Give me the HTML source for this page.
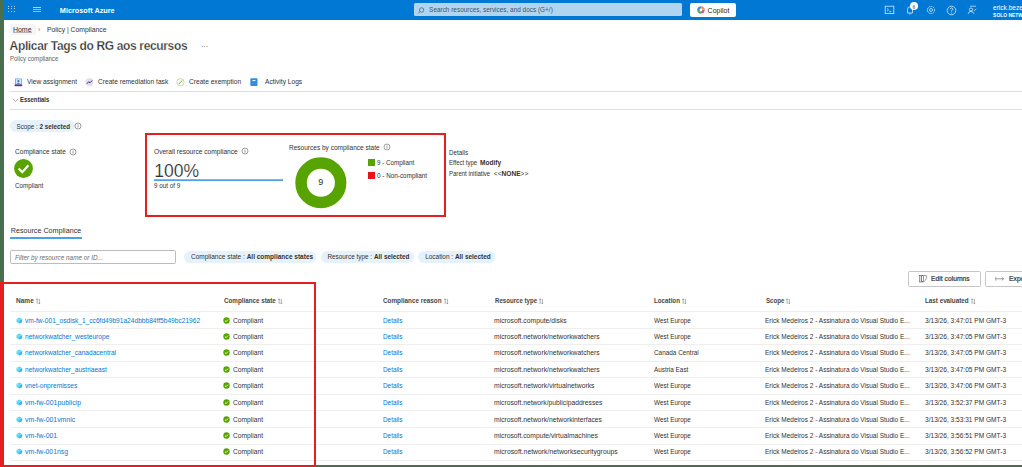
<!DOCTYPE html>
<html><head><meta charset="utf-8"><style>
html,body{margin:0;padding:0;}
body{width:1022px;height:467px;overflow:hidden;position:relative;background:#fff;font-family:"Liberation Sans",sans-serif;}
.t{position:absolute;line-height:1;white-space:nowrap;}
.r{position:absolute;}
.so{font-weight:normal;color:#605e5c;font-size:0.8em;}
#lb{position:absolute;left:0;top:0;width:4px;height:467px;background:#48704e;}
</style></head><body>
<div class="r" style="left:0px;top:0px;width:1022px;height:20px;background:#0078d4"></div>
<div class="t " style="left:59.80px;top:7.00px;font-size:7.3px;font-weight:bold;color:#fff;font-style:normal;">Microsoft Azure</div>
<div class="r" style="left:8.25px;top:5.75px;width:1.1px;height:1.1px;background:#fff;opacity:0.7"></div>
<div class="r" style="left:8.25px;top:8.35px;width:1.1px;height:1.1px;background:#fff;opacity:0.7"></div>
<div class="r" style="left:8.25px;top:10.95px;width:1.1px;height:1.1px;background:#fff;opacity:0.7"></div>
<div class="r" style="left:10.95px;top:5.75px;width:1.1px;height:1.1px;background:#fff;opacity:0.7"></div>
<div class="r" style="left:10.95px;top:8.35px;width:1.1px;height:1.1px;background:#fff;opacity:0.7"></div>
<div class="r" style="left:10.95px;top:10.95px;width:1.1px;height:1.1px;background:#fff;opacity:0.7"></div>
<div class="r" style="left:13.65px;top:5.75px;width:1.1px;height:1.1px;background:#fff;opacity:0.7"></div>
<div class="r" style="left:13.65px;top:8.35px;width:1.1px;height:1.1px;background:#fff;opacity:0.7"></div>
<div class="r" style="left:13.65px;top:10.95px;width:1.1px;height:1.1px;background:#fff;opacity:0.7"></div>
<div class="r" style="left:33px;top:7px;width:7.6px;height:0.8px;background:#fff;opacity:0.7"></div>
<div class="r" style="left:33px;top:9.2px;width:7.6px;height:0.8px;background:#fff;opacity:0.55"></div>
<div class="r" style="left:33px;top:11.3px;width:7.6px;height:0.8px;background:#fff;opacity:0.55"></div>
<div class="r" style="left:413.5px;top:3px;width:268px;height:13.2px;background:#b1d5f1;border-radius:1.5px"></div>
<svg class="r" style="left:417px;top:6.5px" width="8" height="7" viewBox="0 0 8 7"><circle cx="4.6" cy="3" r="2.2" fill="none" stroke="#4a6a8a" stroke-width="0.8"/><line x1="3" y1="4.6" x2="1" y2="6.6" stroke="#4a6a8a" stroke-width="0.8"/></svg>
<div class="t " style="left:429.10px;top:7.00px;font-size:6.43px;font-weight:normal;color:#3b5670;font-style:normal;">Search resources, services, and docs (G+/)</div>
<div class="r" style="left:690.3px;top:3.2px;width:45.8px;height:13.5px;background:#fff;border-radius:2px"></div>
<svg class="r" style="left:696.5px;top:6px" width="8" height="8" viewBox="0 0 8 8"><circle cx="4" cy="4" r="3.6" fill="#e0508a"/><path d="M4 0.4A3.6 3.6 0 0 1 7.6 4L4 4Z" fill="#f2a33a"/><path d="M0.4 4A3.6 3.6 0 0 1 4 0.4L4 4Z" fill="#3a8ee6"/><path d="M4 7.6A3.6 3.6 0 0 1 0.4 4L4 4Z" fill="#48b86a"/><circle cx="4" cy="4" r="1.4" fill="#fff"/></svg>
<div class="t " style="left:707.60px;top:7.00px;font-size:7.0px;font-weight:normal;color:#242424;font-style:normal;">Copilot</div>
<svg class="r" style="left:884px;top:5px" width="11" height="10" viewBox="0 0 11 10"><rect x="1.2" y="1.2" width="8.6" height="7.4" fill="none" stroke="#d8e8f8" stroke-width="0.8"/><path d="M3 3.4L4.6 4.8L3 6.2" fill="none" stroke="#d8e8f8" stroke-width="0.8"/><line x1="5.2" y1="6.6" x2="7.4" y2="6.6" stroke="#d8e8f8" stroke-width="0.8"/></svg>
<svg class="r" style="left:905px;top:5px" width="10" height="10" viewBox="0 0 10 10"><path d="M2.5 8L2.5 4.5Q2.5 1.8 5 1.8Q7.5 1.8 7.5 4.5L7.5 8Z" fill="none" stroke="#d8e8f8" stroke-width="0.8"/><path d="M4 8.6Q5 9.6 6 8.6" fill="none" stroke="#d8e8f8" stroke-width="0.7"/></svg>
<div class="r" style="left:910.1px;top:1.9px;width:8.3px;height:8.3px;border-radius:50%;background:#fff"></div>
<div class="t " style="left:912.60px;top:5.00px;font-size:5px;font-weight:bold;color:#6a7fb0;font-style:normal;">6</div>
<svg class="r" style="left:926px;top:5px" width="10" height="10" viewBox="0 0 10 10"><circle cx="5" cy="5" r="3.6" fill="none" stroke="#d8e8f8" stroke-width="0.9" stroke-dasharray="1.6 0.7"/><circle cx="5" cy="5" r="1.5" fill="none" stroke="#d8e8f8" stroke-width="0.8"/></svg>
<svg class="r" style="left:946px;top:4.5px" width="11" height="11" viewBox="0 0 11 11"><circle cx="5.5" cy="5.5" r="4.3" fill="none" stroke="#d8e8f8" stroke-width="0.8"/><path d="M4.2 4.3Q4.2 3 5.5 3Q6.8 3 6.8 4.2Q6.8 5 5.6 5.6L5.6 6.6" fill="none" stroke="#d8e8f8" stroke-width="0.8"/><circle cx="5.6" cy="8" r="0.5" fill="#d8e8f8"/></svg>
<svg class="r" style="left:967px;top:5px" width="10" height="10" viewBox="0 0 10 10"><circle cx="4" cy="4.6" r="1.6" fill="none" stroke="#d8e8f8" stroke-width="0.8"/><path d="M1.2 8.8Q1.6 6.4 4 6.4Q6.4 6.4 6.8 8.8" fill="none" stroke="#d8e8f8" stroke-width="0.8"/><path d="M3 1.2L9 1.2" stroke="#d8e8f8" stroke-width="0.7"/><path d="M6.8 4.8L7.6 5.6L9.2 3.8" fill="none" stroke="#d8e8f8" stroke-width="0.7"/></svg>
<div class="t " style="left:993.00px;top:5.00px;font-size:6.58px;font-weight:normal;color:#fff;font-style:normal;">erick.bezerra</div>
<div class="t " style="left:993.10px;top:14.00px;font-size:4.95px;font-weight:bold;color:#fff;font-style:normal;">SOLO NETWORKS</div>
<div class="r" style="left:9.8px;top:23.8px;width:26px;height:10.8px;background:#f5f5f5;border-radius:2px"></div>
<div class="t " style="left:12.90px;top:26.00px;font-size:7.0px;font-weight:normal;color:#323130;font-style:normal;">Home</div>
<div class="r" style="left:12.9px;top:32.3px;width:19.6px;height:1.2px;background:#b3b3b3"></div>
<div class="t " style="left:38.00px;top:27.00px;font-size:6.8px;font-weight:normal;color:#8a8886;font-style:normal;">›</div>
<div class="t " style="left:46.70px;top:26.00px;font-size:7.197px;font-weight:normal;color:#323130;font-style:normal;transform:scaleX(0.9434);transform-origin:0 0;">Policy | Compliance</div>
<div class="t " style="left:9.60px;top:40.00px;font-size:12px;font-weight:bold;color:#323130;font-style:normal;letter-spacing:-0.35px;-webkit-text-stroke:0.25px #fff;">Aplicar Tags do RG aos recursos</div>
<div class="t " style="left:201.00px;top:43.00px;font-size:7px;font-weight:normal;color:#323130;font-style:normal;">···</div>
<div class="t " style="left:9.70px;top:56.00px;font-size:6.754px;font-weight:normal;color:#605e5c;font-style:normal;transform:scaleX(0.8929);transform-origin:0 0;">Policy compliance</div>
<div class="t " style="left:26.60px;top:79.00px;font-size:7.16px;font-weight:normal;color:#323130;font-style:normal;transform:scaleX(0.9259);transform-origin:0 0;">View assignment</div>
<div class="t " style="left:97.70px;top:79.00px;font-size:7.15px;font-weight:normal;color:#323130;font-style:normal;transform:scaleX(0.9259);transform-origin:0 0;">Create remediation task</div>
<div class="t " style="left:189.40px;top:79.00px;font-size:7.15px;font-weight:normal;color:#323130;font-style:normal;transform:scaleX(0.9259);transform-origin:0 0;">Create exemption</div>
<div class="t " style="left:265.00px;top:79.00px;font-size:7.15px;font-weight:normal;color:#323130;font-style:normal;transform:scaleX(0.9259);transform-origin:0 0;">Activity Logs</div>
<svg class="r" style="left:13.5px;top:77.5px" width="9" height="9" viewBox="0 0 9 9"><rect x="1" y="0.4" width="6.8" height="6.2" rx="0.5" fill="#5aa6e6"/><rect x="1.8" y="1.2" width="5.2" height="4.6" fill="#d6ecfb"/><circle cx="4.4" cy="3.2" r="1.1" fill="#2c7cd0"/><path d="M2.6 5.8Q4.4 3.8 6.2 5.8Z" fill="#2c7cd0"/><rect x="0.6" y="6.4" width="7.6" height="1.8" fill="#5c3391"/></svg>
<svg class="r" style="left:84.7px;top:77.8px" width="9" height="9" viewBox="0 0 9 9"><circle cx="4.5" cy="4.2" r="4" fill="#e4dcef"/><path d="M1.8 5.8L3.6 3.8L5 4.8L7.2 2.4" fill="none" stroke="#4b2c72" stroke-width="1"/></svg>
<svg class="r" style="left:176.3px;top:77.8px" width="9" height="9" viewBox="0 0 9 9"><circle cx="4.5" cy="4.2" r="3.6" fill="none" stroke="#a6d46a" stroke-width="0.7"/><path d="M2.8 6L6.2 2.4" stroke="#5aa628" stroke-width="0.9"/></svg>
<svg class="r" style="left:250.3px;top:77.8px" width="8" height="9" viewBox="0 0 8 9"><rect x="0.3" y="0.2" width="7.2" height="7.8" rx="0.8" fill="#2f8fe6"/><rect x="2.4" y="2" width="3" height="0.9" fill="#fff"/></svg>
<div class="r" style="left:10px;top:91px;width:1012px;height:1px;background:#e1dfdd"></div>
<svg class="r" style="left:11.5px;top:97.5px" width="7" height="5" viewBox="0 0 7 5"><path d="M0.8 0.8L3.5 3.6L6.2 0.8" fill="none" stroke="#8a8886" stroke-width="0.7"/></svg>
<div class="t " style="left:20.00px;top:97.00px;font-size:6.808px;font-weight:bold;color:#323130;font-style:normal;transform:scaleX(0.8696);transform-origin:0 0;">Essentials</div>
<div class="r" style="left:10px;top:109px;width:1012px;height:1px;background:#e1dfdd"></div>
<div class="r" style="left:10px;top:120.4px;width:65px;height:12px;background:#e6f2fb;border-radius:6px"></div>
<div class="t " style="left:16.50px;top:124.00px;font-size:6.3px;font-weight:normal;color:#323130;font-style:normal;">Scope : <b>2 selected</b></div>
<svg class="r" style="left:74.40px;top:121.80px" width="8" height="8" viewBox="0 0 8 8"><circle cx="4" cy="4" r="3.0" fill="none" stroke="#605e5c" stroke-width="0.6"/><line x1="4" y1="3.2" x2="4" y2="5.6" stroke="#605e5c" stroke-width="0.65"/><circle cx="4" cy="2.3" r="0.35" fill="#605e5c"/></svg>
<div class="t " style="left:14.50px;top:148.00px;font-size:7.249px;font-weight:normal;color:#323130;font-style:normal;transform:scaleX(0.9091);transform-origin:0 0;">Compliance state</div>
<svg class="r" style="left:68.60px;top:147.60px" width="8" height="8" viewBox="0 0 8 8"><circle cx="4" cy="4" r="3.0" fill="none" stroke="#605e5c" stroke-width="0.6"/><line x1="4" y1="3.2" x2="4" y2="5.6" stroke="#605e5c" stroke-width="0.65"/><circle cx="4" cy="2.3" r="0.35" fill="#605e5c"/></svg>
<svg class="r" style="left:14px;top:158.6px" width="19" height="19" viewBox="0 0 19 19"><circle cx="9.5" cy="9.5" r="9.4" fill="#57a300"/><path d="M4.7 9.6L8.3 13.3L14.4 6.3" fill="none" stroke="#fff" stroke-width="2.1"/></svg>
<div class="t " style="left:14.50px;top:183.00px;font-size:6.919px;font-weight:normal;color:#323130;font-style:normal;transform:scaleX(0.9091);transform-origin:0 0;">Compliant</div>
<div class="r" style="left:145px;top:133px;width:300.5px;height:83.5px;border:2.5px solid #e51f1f;box-sizing:border-box"></div>
<div class="t " style="left:153.80px;top:148.00px;font-size:7.271px;font-weight:normal;color:#323130;font-style:normal;transform:scaleX(0.9091);transform-origin:0 0;">Overall resource compliance</div>
<svg class="r" style="left:241.20px;top:146.60px" width="8" height="8" viewBox="0 0 8 8"><circle cx="4" cy="4" r="3.0" fill="none" stroke="#605e5c" stroke-width="0.6"/><line x1="4" y1="3.2" x2="4" y2="5.6" stroke="#605e5c" stroke-width="0.65"/><circle cx="4" cy="2.3" r="0.35" fill="#605e5c"/></svg>
<div class="t " style="left:154.20px;top:163.00px;font-size:17.5px;font-weight:normal;color:#323130;font-style:normal;-webkit-text-stroke:0.15px #fff;">100%</div>
<div class="r" style="left:153.8px;top:179px;width:129.2px;height:2px;background:linear-gradient(#8cc4ee,#3d96e0)"></div>
<div class="t " style="left:153.80px;top:183.00px;font-size:6.782px;font-weight:normal;color:#323130;font-style:normal;transform:scaleX(0.9259);transform-origin:0 0;">9 out of 9</div>
<div class="t " style="left:288.50px;top:145.00px;font-size:7.183px;font-weight:normal;color:#323130;font-style:normal;transform:scaleX(0.9091);transform-origin:0 0;">Resources by compliance state</div>
<svg class="r" style="left:382.80px;top:142.60px" width="8" height="8" viewBox="0 0 8 8"><circle cx="4" cy="4" r="3.0" fill="none" stroke="#605e5c" stroke-width="0.6"/><line x1="4" y1="3.2" x2="4" y2="5.6" stroke="#605e5c" stroke-width="0.65"/><circle cx="4" cy="2.3" r="0.35" fill="#605e5c"/></svg>
<svg class="r" style="left:294px;top:155.5px" width="54" height="54" viewBox="0 0 54 54"><circle cx="26.85" cy="26.75" r="19.8" fill="none" stroke="#57a300" stroke-width="11.5"/></svg>
<div class="t " style="left:318.30px;top:178.00px;font-size:9px;font-weight:normal;color:#323130;font-style:normal;">9</div>
<div class="t " style="left:376.60px;top:159.00px;font-size:7.011px;font-weight:normal;color:#323130;font-style:normal;transform:scaleX(0.8929);transform-origin:0 0;">9 - Compliant</div>
<div class="t " style="left:376.60px;top:173.00px;font-size:7.123px;font-weight:normal;color:#323130;font-style:normal;transform:scaleX(0.8929);transform-origin:0 0;">0 - Non-compliant</div>
<div class="r" style="left:367.9px;top:159.2px;width:6.8px;height:6.6px;background:#57a300"></div>
<div class="r" style="left:367.9px;top:172px;width:6.8px;height:6.8px;background:#e8141a"></div>
<div class="t " style="left:448.80px;top:149.00px;font-size:7.0px;font-weight:normal;color:#323130;font-style:normal;transform:scaleX(0.893);transform-origin:0 0;">Details</div>
<div class="t " style="left:448.80px;top:160.00px;font-size:6.6px;font-weight:normal;color:#323130;font-style:normal;transform:scaleX(0.908);transform-origin:0 0;">Effect type</div>
<div class="t " style="left:479.90px;top:160.00px;font-size:6.9px;font-weight:bold;color:#323130;font-style:normal;transform:scaleX(0.95);transform-origin:0 0;">Modify</div>
<div class="t " style="left:448.80px;top:171.00px;font-size:6.6px;font-weight:normal;color:#323130;font-style:normal;transform:scaleX(0.914);transform-origin:0 0;">Parent initiative</div>
<div class="t " style="left:493.80px;top:171.00px;font-size:6.6px;font-weight:normal;color:#323130;font-style:normal;">&lt;&lt;<b>NONE</b>&gt;&gt;</div>
<div class="t " style="left:10.80px;top:228.00px;font-size:7.16px;font-weight:normal;color:#323130;font-style:normal;">Resource Compliance</div>
<div class="r" style="left:9.8px;top:237px;width:72px;height:2px;background:#4ca0e6"></div>
<div class="r" style="left:9.8px;top:250.2px;width:166px;height:13.5px;border:1px solid #bebcba;border-radius:1.5px;box-sizing:border-box"></div>
<div class="t " style="left:14.70px;top:254.00px;font-size:7.029px;font-weight:normal;color:#6f6d6b;font-style:italic;transform:scaleX(0.9091);transform-origin:0 0;">Filter by resource name or ID...</div>
<div class="r" style="left:184px;top:251.3px;width:132.4px;height:11.9px;background:#e6f2fb;border-radius:6px"></div>
<div class="t " style="left:191.00px;top:254.00px;font-size:6.5px;font-weight:normal;color:#323130;font-style:normal;">Compliance state : <b>All compliance states</b></div>
<div class="r" style="left:321px;top:251.3px;width:93px;height:11.9px;background:#e6f2fb;border-radius:6px"></div>
<div class="t " style="left:327.40px;top:254.00px;font-size:6.4px;font-weight:normal;color:#323130;font-style:normal;">Resource type : <b>All selected</b></div>
<div class="r" style="left:417.8px;top:251.3px;width:77.5px;height:11.9px;background:#e6f2fb;border-radius:6px"></div>
<div class="t " style="left:425.20px;top:254.00px;font-size:6.45px;font-weight:normal;color:#323130;font-style:normal;">Location : <b>All selected</b></div>
<div class="r" style="left:908.1px;top:270.5px;width:73.1px;height:16px;border:1px solid #c8c6c4;border-radius:1.5px;box-sizing:border-box"></div>
<svg class="r" style="left:918.5px;top:275px" width="9" height="8" viewBox="0 0 9 8"><rect x="0.5" y="0.6" width="1.6" height="6.4" fill="none" stroke="#605e5c" stroke-width="0.6"/><rect x="2.7" y="0.6" width="1.6" height="6.4" fill="none" stroke="#605e5c" stroke-width="0.6"/><path d="M4.9 0.6L7.6 0.6L7.6 3L5.4 6.6" fill="none" stroke="#605e5c" stroke-width="0.6"/></svg>
<div class="t " style="left:931.30px;top:275.00px;font-size:7.0px;font-weight:normal;color:#323130;font-style:normal;transform:scaleX(0.965);transform-origin:0 0;-webkit-text-stroke:0.2px #323130;">Edit columns</div>
<div class="r" style="left:985.4px;top:270.5px;width:60px;height:16px;border:1px solid #c8c6c4;border-radius:1.5px;box-sizing:border-box"></div>
<svg class="r" style="left:995px;top:275.5px" width="10" height="6" viewBox="0 0 10 6"><line x1="0.8" y1="1" x2="0.8" y2="4.6" stroke="#605e5c" stroke-width="0.6"/><line x1="0.8" y1="2.8" x2="8.6" y2="2.8" stroke="#605e5c" stroke-width="0.6"/><path d="M6.8 1.2L8.6 2.8L6.8 4.4" fill="none" stroke="#605e5c" stroke-width="0.6"/></svg>
<div class="t " style="left:1008.60px;top:275.00px;font-size:7.0px;font-weight:normal;color:#323130;font-style:normal;transform:scaleX(0.965);transform-origin:0 0;-webkit-text-stroke:0.2px #323130;">Export</div>
<div class="t " style="left:16.00px;top:298.00px;font-size:7.1px;font-weight:bold;color:#484644;font-style:normal;transform:scaleX(0.9211);transform-origin:0 0;">Name</div>
<div class="t " style="left:223.50px;top:298.00px;font-size:7.1px;font-weight:bold;color:#484644;font-style:normal;transform:scaleX(0.8817);transform-origin:0 0;">Compliance state</div>
<div class="t " style="left:382.80px;top:298.00px;font-size:7.1px;font-weight:bold;color:#484644;font-style:normal;transform:scaleX(0.8958);transform-origin:0 0;">Compliance reason</div>
<div class="t " style="left:494.50px;top:298.00px;font-size:7.1px;font-weight:bold;color:#484644;font-style:normal;transform:scaleX(0.862);transform-origin:0 0;">Resource type</div>
<div class="t " style="left:654.00px;top:298.00px;font-size:7.1px;font-weight:bold;color:#484644;font-style:normal;transform:scaleX(0.8789);transform-origin:0 0;">Location</div>
<div class="t " style="left:765.60px;top:298.00px;font-size:7.1px;font-weight:bold;color:#484644;font-style:normal;transform:scaleX(0.8676);transform-origin:0 0;">Scope</div>
<div class="t " style="left:924.80px;top:298.00px;font-size:7.1px;font-weight:bold;color:#484644;font-style:normal;transform:scaleX(0.8845);transform-origin:0 0;">Last evaluated</div>
<svg class="r" style="left:36.30px;top:297.5px" width="5" height="7" viewBox="0 0 5 7"><path d="M1.1 5.8V0.8M0.2 1.8L1.1 0.8L2 1.8M3.3 0.8V5.8M2.4 4.8L3.3 5.8L4.2 4.8" fill="none" stroke="#797775" stroke-width="0.6"/></svg>
<svg class="r" style="left:278.20px;top:297.5px" width="5" height="7" viewBox="0 0 5 7"><path d="M1.1 5.8V0.8M0.2 1.8L1.1 0.8L2 1.8M3.3 0.8V5.8M2.4 4.8L3.3 5.8L4.2 4.8" fill="none" stroke="#797775" stroke-width="0.6"/></svg>
<svg class="r" style="left:443.90px;top:297.5px" width="5" height="7" viewBox="0 0 5 7"><path d="M1.1 5.8V0.8M0.2 1.8L1.1 0.8L2 1.8M3.3 0.8V5.8M2.4 4.8L3.3 5.8L4.2 4.8" fill="none" stroke="#797775" stroke-width="0.6"/></svg>
<svg class="r" style="left:539.30px;top:297.5px" width="5" height="7" viewBox="0 0 5 7"><path d="M1.1 5.8V0.8M0.2 1.8L1.1 0.8L2 1.8M3.3 0.8V5.8M2.4 4.8L3.3 5.8L4.2 4.8" fill="none" stroke="#797775" stroke-width="0.6"/></svg>
<svg class="r" style="left:682.20px;top:297.5px" width="5" height="7" viewBox="0 0 5 7"><path d="M1.1 5.8V0.8M0.2 1.8L1.1 0.8L2 1.8M3.3 0.8V5.8M2.4 4.8L3.3 5.8L4.2 4.8" fill="none" stroke="#797775" stroke-width="0.6"/></svg>
<svg class="r" style="left:785.60px;top:297.5px" width="5" height="7" viewBox="0 0 5 7"><path d="M1.1 5.8V0.8M0.2 1.8L1.1 0.8L2 1.8M3.3 0.8V5.8M2.4 4.8L3.3 5.8L4.2 4.8" fill="none" stroke="#797775" stroke-width="0.6"/></svg>
<svg class="r" style="left:970.80px;top:297.5px" width="5" height="7" viewBox="0 0 5 7"><path d="M1.1 5.8V0.8M0.2 1.8L1.1 0.8L2 1.8M3.3 0.8V5.8M2.4 4.8L3.3 5.8L4.2 4.8" fill="none" stroke="#797775" stroke-width="0.6"/></svg>
<div class="r" style="left:9.6px;top:311px;width:1013px;height:1px;background:#f0efee"></div>
<div class="t " style="left:25.30px;top:318.00px;font-size:6.7px;font-weight:normal;color:#0078d4;font-style:normal;transform:scaleX(0.9881);transform-origin:0 0;">vm-fw-001_osdisk_1_cc6fd49b91a24dbbb84ff5b49bc21962</div>
<div class="t " style="left:232.90px;top:318.00px;font-size:6.7px;font-weight:normal;color:#323130;font-style:normal;transform:scaleX(0.9985);transform-origin:0 0;">Compliant</div>
<div class="t " style="left:382.80px;top:318.00px;font-size:6.7px;font-weight:normal;color:#0078d4;font-style:normal;transform:scaleX(0.9522);transform-origin:0 0;">Details</div>
<div class="t " style="left:494.40px;top:318.00px;font-size:6.7px;font-weight:normal;color:#323130;font-style:normal;transform:scaleX(1.0134);transform-origin:0 0;">microsoft.compute/disks</div>
<div class="t " style="left:654.00px;top:318.00px;font-size:6.7px;font-weight:normal;color:#323130;font-style:normal;transform:scaleX(0.9582);transform-origin:0 0;">West Europe</div>
<div class="t " style="left:765.40px;top:318.00px;font-size:6.7px;font-weight:normal;color:#323130;font-style:normal;transform:scaleX(0.9716);transform-origin:0 0;">Erick Medeiros 2 - Assinatura do Visual Studio E...</div>
<div class="t " style="left:924.80px;top:318.00px;font-size:6.7px;font-weight:normal;color:#323130;font-style:normal;transform:scaleX(0.9821);transform-origin:0 0;">3/13/26, 3:47:01 PM GMT-3</div>
<div class="r" style="left:9.6px;top:327.5px;width:1013px;height:1px;background:#f0efee"></div>
<svg class="r" style="left:16px;top:317.10px" width="7" height="7" viewBox="0 0 7 7"><path d="M3.3 0.4L6.1 1.9L6.1 5L3.3 6.5L0.5 5L0.5 1.9Z" fill="#5ad6f8"/><path d="M3.3 3.4L6.1 1.9L6.1 5L3.3 6.5Z" fill="#3bb4ec"/><path d="M0.5 1.9L3.3 3.4L6.1 1.9" fill="none" stroke="#d0f4ff" stroke-width="0.4"/></svg>
<svg class="r" style="left:222.7px;top:317.10px" width="7" height="7" viewBox="0 0 7 7"><circle cx="3.5" cy="3.5" r="3.2" fill="#57a300"/><path d="M1.9 3.6L3 4.7L5.1 2.5" fill="none" stroke="#fff" stroke-width="0.85"/></svg>
<div class="t " style="left:25.30px;top:334.00px;font-size:6.7px;font-weight:normal;color:#0078d4;font-style:normal;transform:scaleX(0.991);transform-origin:0 0;">networkwatcher_westeurope</div>
<div class="t " style="left:232.90px;top:334.00px;font-size:6.7px;font-weight:normal;color:#323130;font-style:normal;transform:scaleX(0.9985);transform-origin:0 0;">Compliant</div>
<div class="t " style="left:382.80px;top:334.00px;font-size:6.7px;font-weight:normal;color:#0078d4;font-style:normal;transform:scaleX(0.9522);transform-origin:0 0;">Details</div>
<div class="t " style="left:494.40px;top:334.00px;font-size:6.7px;font-weight:normal;color:#323130;font-style:normal;transform:scaleX(1.0119);transform-origin:0 0;">microsoft.network/networkwatchers</div>
<div class="t " style="left:654.00px;top:334.00px;font-size:6.7px;font-weight:normal;color:#323130;font-style:normal;transform:scaleX(0.9582);transform-origin:0 0;">West Europe</div>
<div class="t " style="left:765.40px;top:334.00px;font-size:6.7px;font-weight:normal;color:#323130;font-style:normal;transform:scaleX(0.9716);transform-origin:0 0;">Erick Medeiros 2 - Assinatura do Visual Studio E...</div>
<div class="t " style="left:924.80px;top:334.00px;font-size:6.7px;font-weight:normal;color:#323130;font-style:normal;transform:scaleX(0.9821);transform-origin:0 0;">3/13/26, 3:47:05 PM GMT-3</div>
<div class="r" style="left:9.6px;top:344.1px;width:1013px;height:1px;background:#f0efee"></div>
<svg class="r" style="left:16px;top:333.10px" width="7" height="7" viewBox="0 0 7 7"><path d="M3.3 0.4L6.1 1.9L6.1 5L3.3 6.5L0.5 5L0.5 1.9Z" fill="#5ad6f8"/><path d="M3.3 3.4L6.1 1.9L6.1 5L3.3 6.5Z" fill="#3bb4ec"/><path d="M0.5 1.9L3.3 3.4L6.1 1.9" fill="none" stroke="#d0f4ff" stroke-width="0.4"/></svg>
<svg class="r" style="left:222.7px;top:333.10px" width="7" height="7" viewBox="0 0 7 7"><circle cx="3.5" cy="3.5" r="3.2" fill="#57a300"/><path d="M1.9 3.6L3 4.7L5.1 2.5" fill="none" stroke="#fff" stroke-width="0.85"/></svg>
<div class="t " style="left:25.30px;top:350.00px;font-size:6.7px;font-weight:normal;color:#0078d4;font-style:normal;transform:scaleX(0.9836);transform-origin:0 0;">networkwatcher_canadacentral</div>
<div class="t " style="left:232.90px;top:350.00px;font-size:6.7px;font-weight:normal;color:#323130;font-style:normal;transform:scaleX(0.9985);transform-origin:0 0;">Compliant</div>
<div class="t " style="left:382.80px;top:350.00px;font-size:6.7px;font-weight:normal;color:#0078d4;font-style:normal;transform:scaleX(0.9522);transform-origin:0 0;">Details</div>
<div class="t " style="left:494.40px;top:350.00px;font-size:6.7px;font-weight:normal;color:#323130;font-style:normal;transform:scaleX(1.0119);transform-origin:0 0;">microsoft.network/networkwatchers</div>
<div class="t " style="left:654.00px;top:350.00px;font-size:6.7px;font-weight:normal;color:#323130;font-style:normal;transform:scaleX(0.9552);transform-origin:0 0;">Canada Central</div>
<div class="t " style="left:765.40px;top:350.00px;font-size:6.7px;font-weight:normal;color:#323130;font-style:normal;transform:scaleX(0.9716);transform-origin:0 0;">Erick Medeiros 2 - Assinatura do Visual Studio E...</div>
<div class="t " style="left:924.80px;top:350.00px;font-size:6.7px;font-weight:normal;color:#323130;font-style:normal;transform:scaleX(0.9821);transform-origin:0 0;">3/13/26, 3:47:05 PM GMT-3</div>
<div class="r" style="left:9.6px;top:360.8px;width:1013px;height:1px;background:#f0efee"></div>
<svg class="r" style="left:16px;top:349.10px" width="7" height="7" viewBox="0 0 7 7"><path d="M3.3 0.4L6.1 1.9L6.1 5L3.3 6.5L0.5 5L0.5 1.9Z" fill="#5ad6f8"/><path d="M3.3 3.4L6.1 1.9L6.1 5L3.3 6.5Z" fill="#3bb4ec"/><path d="M0.5 1.9L3.3 3.4L6.1 1.9" fill="none" stroke="#d0f4ff" stroke-width="0.4"/></svg>
<svg class="r" style="left:222.7px;top:349.10px" width="7" height="7" viewBox="0 0 7 7"><circle cx="3.5" cy="3.5" r="3.2" fill="#57a300"/><path d="M1.9 3.6L3 4.7L5.1 2.5" fill="none" stroke="#fff" stroke-width="0.85"/></svg>
<div class="t " style="left:25.30px;top:367.00px;font-size:6.7px;font-weight:normal;color:#0078d4;font-style:normal;transform:scaleX(0.9836);transform-origin:0 0;">networkwatcher_austriaeast</div>
<div class="t " style="left:232.90px;top:367.00px;font-size:6.7px;font-weight:normal;color:#323130;font-style:normal;transform:scaleX(0.9985);transform-origin:0 0;">Compliant</div>
<div class="t " style="left:382.80px;top:367.00px;font-size:6.7px;font-weight:normal;color:#0078d4;font-style:normal;transform:scaleX(0.9522);transform-origin:0 0;">Details</div>
<div class="t " style="left:494.40px;top:367.00px;font-size:6.7px;font-weight:normal;color:#323130;font-style:normal;transform:scaleX(1.0119);transform-origin:0 0;">microsoft.network/networkwatchers</div>
<div class="t " style="left:654.00px;top:367.00px;font-size:6.7px;font-weight:normal;color:#323130;font-style:normal;transform:scaleX(0.9522);transform-origin:0 0;">Austria East</div>
<div class="t " style="left:765.40px;top:367.00px;font-size:6.7px;font-weight:normal;color:#323130;font-style:normal;transform:scaleX(0.9716);transform-origin:0 0;">Erick Medeiros 2 - Assinatura do Visual Studio E...</div>
<div class="t " style="left:924.80px;top:367.00px;font-size:6.7px;font-weight:normal;color:#323130;font-style:normal;transform:scaleX(0.9821);transform-origin:0 0;">3/13/26, 3:47:05 PM GMT-3</div>
<div class="r" style="left:9.6px;top:377.1px;width:1013px;height:1px;background:#f0efee"></div>
<svg class="r" style="left:16px;top:366.10px" width="7" height="7" viewBox="0 0 7 7"><path d="M3.3 0.4L6.1 1.9L6.1 5L3.3 6.5L0.5 5L0.5 1.9Z" fill="#5ad6f8"/><path d="M3.3 3.4L6.1 1.9L6.1 5L3.3 6.5Z" fill="#3bb4ec"/><path d="M0.5 1.9L3.3 3.4L6.1 1.9" fill="none" stroke="#d0f4ff" stroke-width="0.4"/></svg>
<svg class="r" style="left:222.7px;top:366.10px" width="7" height="7" viewBox="0 0 7 7"><circle cx="3.5" cy="3.5" r="3.2" fill="#57a300"/><path d="M1.9 3.6L3 4.7L5.1 2.5" fill="none" stroke="#fff" stroke-width="0.85"/></svg>
<div class="t " style="left:25.30px;top:383.00px;font-size:6.7px;font-weight:normal;color:#0078d4;font-style:normal;transform:scaleX(0.9896);transform-origin:0 0;">vnet-onpremisses</div>
<div class="t " style="left:232.90px;top:383.00px;font-size:6.7px;font-weight:normal;color:#323130;font-style:normal;transform:scaleX(0.9985);transform-origin:0 0;">Compliant</div>
<div class="t " style="left:382.80px;top:383.00px;font-size:6.7px;font-weight:normal;color:#0078d4;font-style:normal;transform:scaleX(0.9522);transform-origin:0 0;">Details</div>
<div class="t " style="left:494.40px;top:383.00px;font-size:6.7px;font-weight:normal;color:#323130;font-style:normal;transform:scaleX(1.0164);transform-origin:0 0;">microsoft.network/virtualnetworks</div>
<div class="t " style="left:654.00px;top:383.00px;font-size:6.7px;font-weight:normal;color:#323130;font-style:normal;transform:scaleX(0.9582);transform-origin:0 0;">West Europe</div>
<div class="t " style="left:765.40px;top:383.00px;font-size:6.7px;font-weight:normal;color:#323130;font-style:normal;transform:scaleX(0.9716);transform-origin:0 0;">Erick Medeiros 2 - Assinatura do Visual Studio E...</div>
<div class="t " style="left:924.80px;top:383.00px;font-size:6.7px;font-weight:normal;color:#323130;font-style:normal;transform:scaleX(0.9821);transform-origin:0 0;">3/13/26, 3:47:06 PM GMT-3</div>
<div class="r" style="left:9.6px;top:393.7px;width:1013px;height:1px;background:#f0efee"></div>
<svg class="r" style="left:16px;top:382.10px" width="7" height="7" viewBox="0 0 7 7"><path d="M3.3 0.4L6.1 1.9L6.1 5L3.3 6.5L0.5 5L0.5 1.9Z" fill="#5ad6f8"/><path d="M3.3 3.4L6.1 1.9L6.1 5L3.3 6.5Z" fill="#3bb4ec"/><path d="M0.5 1.9L3.3 3.4L6.1 1.9" fill="none" stroke="#d0f4ff" stroke-width="0.4"/></svg>
<svg class="r" style="left:222.7px;top:382.10px" width="7" height="7" viewBox="0 0 7 7"><circle cx="3.5" cy="3.5" r="3.2" fill="#57a300"/><path d="M1.9 3.6L3 4.7L5.1 2.5" fill="none" stroke="#fff" stroke-width="0.85"/></svg>
<div class="t " style="left:25.30px;top:400.00px;font-size:6.7px;font-weight:normal;color:#0078d4;font-style:normal;transform:scaleX(1.0403);transform-origin:0 0;">vm-fw-001publicip</div>
<div class="t " style="left:232.90px;top:400.00px;font-size:6.7px;font-weight:normal;color:#323130;font-style:normal;transform:scaleX(0.9985);transform-origin:0 0;">Compliant</div>
<div class="t " style="left:382.80px;top:400.00px;font-size:6.7px;font-weight:normal;color:#0078d4;font-style:normal;transform:scaleX(0.9522);transform-origin:0 0;">Details</div>
<div class="t " style="left:494.40px;top:400.00px;font-size:6.7px;font-weight:normal;color:#323130;font-style:normal;transform:scaleX(1.006);transform-origin:0 0;">microsoft.network/publicipaddresses</div>
<div class="t " style="left:654.00px;top:400.00px;font-size:6.7px;font-weight:normal;color:#323130;font-style:normal;transform:scaleX(0.9582);transform-origin:0 0;">West Europe</div>
<div class="t " style="left:765.40px;top:400.00px;font-size:6.7px;font-weight:normal;color:#323130;font-style:normal;transform:scaleX(0.9716);transform-origin:0 0;">Erick Medeiros 2 - Assinatura do Visual Studio E...</div>
<div class="t " style="left:924.80px;top:400.00px;font-size:6.7px;font-weight:normal;color:#323130;font-style:normal;transform:scaleX(0.9821);transform-origin:0 0;">3/13/26, 3:52:37 PM GMT-3</div>
<div class="r" style="left:9.6px;top:410.2px;width:1013px;height:1px;background:#f0efee"></div>
<svg class="r" style="left:16px;top:399.10px" width="7" height="7" viewBox="0 0 7 7"><path d="M3.3 0.4L6.1 1.9L6.1 5L3.3 6.5L0.5 5L0.5 1.9Z" fill="#5ad6f8"/><path d="M3.3 3.4L6.1 1.9L6.1 5L3.3 6.5Z" fill="#3bb4ec"/><path d="M0.5 1.9L3.3 3.4L6.1 1.9" fill="none" stroke="#d0f4ff" stroke-width="0.4"/></svg>
<svg class="r" style="left:222.7px;top:399.10px" width="7" height="7" viewBox="0 0 7 7"><circle cx="3.5" cy="3.5" r="3.2" fill="#57a300"/><path d="M1.9 3.6L3 4.7L5.1 2.5" fill="none" stroke="#fff" stroke-width="0.85"/></svg>
<div class="t " style="left:25.30px;top:417.00px;font-size:6.7px;font-weight:normal;color:#0078d4;font-style:normal;transform:scaleX(1.0299);transform-origin:0 0;">vm-fw-001vmnic</div>
<div class="t " style="left:232.90px;top:417.00px;font-size:6.7px;font-weight:normal;color:#323130;font-style:normal;transform:scaleX(0.9985);transform-origin:0 0;">Compliant</div>
<div class="t " style="left:382.80px;top:417.00px;font-size:6.7px;font-weight:normal;color:#0078d4;font-style:normal;transform:scaleX(0.9522);transform-origin:0 0;">Details</div>
<div class="t " style="left:494.40px;top:417.00px;font-size:6.7px;font-weight:normal;color:#323130;font-style:normal;transform:scaleX(1.0119);transform-origin:0 0;">microsoft.network/networkinterfaces</div>
<div class="t " style="left:654.00px;top:417.00px;font-size:6.7px;font-weight:normal;color:#323130;font-style:normal;transform:scaleX(0.9582);transform-origin:0 0;">West Europe</div>
<div class="t " style="left:765.40px;top:417.00px;font-size:6.7px;font-weight:normal;color:#323130;font-style:normal;transform:scaleX(0.9716);transform-origin:0 0;">Erick Medeiros 2 - Assinatura do Visual Studio E...</div>
<div class="t " style="left:924.80px;top:417.00px;font-size:6.7px;font-weight:normal;color:#323130;font-style:normal;transform:scaleX(0.9821);transform-origin:0 0;">3/13/26, 3:53:31 PM GMT-3</div>
<div class="r" style="left:9.6px;top:427.1px;width:1013px;height:1px;background:#f0efee"></div>
<svg class="r" style="left:16px;top:416.10px" width="7" height="7" viewBox="0 0 7 7"><path d="M3.3 0.4L6.1 1.9L6.1 5L3.3 6.5L0.5 5L0.5 1.9Z" fill="#5ad6f8"/><path d="M3.3 3.4L6.1 1.9L6.1 5L3.3 6.5Z" fill="#3bb4ec"/><path d="M0.5 1.9L3.3 3.4L6.1 1.9" fill="none" stroke="#d0f4ff" stroke-width="0.4"/></svg>
<svg class="r" style="left:222.7px;top:416.10px" width="7" height="7" viewBox="0 0 7 7"><circle cx="3.5" cy="3.5" r="3.2" fill="#57a300"/><path d="M1.9 3.6L3 4.7L5.1 2.5" fill="none" stroke="#fff" stroke-width="0.85"/></svg>
<div class="t " style="left:25.30px;top:433.00px;font-size:6.7px;font-weight:normal;color:#0078d4;font-style:normal;transform:scaleX(1.0299);transform-origin:0 0;">vm-fw-001</div>
<div class="t " style="left:232.90px;top:433.00px;font-size:6.7px;font-weight:normal;color:#323130;font-style:normal;transform:scaleX(0.9985);transform-origin:0 0;">Compliant</div>
<div class="t " style="left:382.80px;top:433.00px;font-size:6.7px;font-weight:normal;color:#0078d4;font-style:normal;transform:scaleX(0.9522);transform-origin:0 0;">Details</div>
<div class="t " style="left:494.40px;top:433.00px;font-size:6.7px;font-weight:normal;color:#323130;font-style:normal;transform:scaleX(1.009);transform-origin:0 0;">microsoft.compute/virtualmachines</div>
<div class="t " style="left:654.00px;top:433.00px;font-size:6.7px;font-weight:normal;color:#323130;font-style:normal;transform:scaleX(0.9582);transform-origin:0 0;">West Europe</div>
<div class="t " style="left:765.40px;top:433.00px;font-size:6.7px;font-weight:normal;color:#323130;font-style:normal;transform:scaleX(0.9716);transform-origin:0 0;">Erick Medeiros 2 - Assinatura do Visual Studio E...</div>
<div class="t " style="left:924.80px;top:433.00px;font-size:6.7px;font-weight:normal;color:#323130;font-style:normal;transform:scaleX(0.9821);transform-origin:0 0;">3/13/26, 3:56:51 PM GMT-3</div>
<div class="r" style="left:9.6px;top:443.7px;width:1013px;height:1px;background:#f0efee"></div>
<svg class="r" style="left:16px;top:432.10px" width="7" height="7" viewBox="0 0 7 7"><path d="M3.3 0.4L6.1 1.9L6.1 5L3.3 6.5L0.5 5L0.5 1.9Z" fill="#5ad6f8"/><path d="M3.3 3.4L6.1 1.9L6.1 5L3.3 6.5Z" fill="#3bb4ec"/><path d="M0.5 1.9L3.3 3.4L6.1 1.9" fill="none" stroke="#d0f4ff" stroke-width="0.4"/></svg>
<svg class="r" style="left:222.7px;top:432.10px" width="7" height="7" viewBox="0 0 7 7"><circle cx="3.5" cy="3.5" r="3.2" fill="#57a300"/><path d="M1.9 3.6L3 4.7L5.1 2.5" fill="none" stroke="#fff" stroke-width="0.85"/></svg>
<div class="t " style="left:25.30px;top:449.00px;font-size:6.7px;font-weight:normal;color:#0078d4;font-style:normal;transform:scaleX(1.0239);transform-origin:0 0;">vm-fw-001nsg</div>
<div class="t " style="left:232.90px;top:449.00px;font-size:6.7px;font-weight:normal;color:#323130;font-style:normal;transform:scaleX(0.9985);transform-origin:0 0;">Compliant</div>
<div class="t " style="left:382.80px;top:449.00px;font-size:6.7px;font-weight:normal;color:#0078d4;font-style:normal;transform:scaleX(0.9522);transform-origin:0 0;">Details</div>
<div class="t " style="left:494.40px;top:449.00px;font-size:6.7px;font-weight:normal;color:#323130;font-style:normal;transform:scaleX(1.0209);transform-origin:0 0;">microsoft.network/networksecuritygroups</div>
<div class="t " style="left:654.00px;top:449.00px;font-size:6.7px;font-weight:normal;color:#323130;font-style:normal;transform:scaleX(0.9582);transform-origin:0 0;">West Europe</div>
<div class="t " style="left:765.40px;top:449.00px;font-size:6.7px;font-weight:normal;color:#323130;font-style:normal;transform:scaleX(0.9716);transform-origin:0 0;">Erick Medeiros 2 - Assinatura do Visual Studio E...</div>
<div class="t " style="left:924.80px;top:449.00px;font-size:6.7px;font-weight:normal;color:#323130;font-style:normal;transform:scaleX(0.9821);transform-origin:0 0;">3/13/26, 3:56:52 PM GMT-3</div>
<div class="r" style="left:9.6px;top:460px;width:1013px;height:1px;background:#f0efee"></div>
<svg class="r" style="left:16px;top:448.10px" width="7" height="7" viewBox="0 0 7 7"><path d="M3.3 0.4L6.1 1.9L6.1 5L3.3 6.5L0.5 5L0.5 1.9Z" fill="#5ad6f8"/><path d="M3.3 3.4L6.1 1.9L6.1 5L3.3 6.5Z" fill="#3bb4ec"/><path d="M0.5 1.9L3.3 3.4L6.1 1.9" fill="none" stroke="#d0f4ff" stroke-width="0.4"/></svg>
<svg class="r" style="left:222.7px;top:448.10px" width="7" height="7" viewBox="0 0 7 7"><circle cx="3.5" cy="3.5" r="3.2" fill="#57a300"/><path d="M1.9 3.6L3 4.7L5.1 2.5" fill="none" stroke="#fff" stroke-width="0.85"/></svg>
<div class="r" style="left:0px;top:281.5px;width:315.5px;height:185.5px;border:2.5px solid #e51f1f;border-left-width:4px;box-sizing:border-box;z-index:5"></div>
<div class="r" style="left:315.5px;top:465px;width:706.5px;height:2px;background:#48704e"></div>
<div id="lb"></div>
</body></html>
